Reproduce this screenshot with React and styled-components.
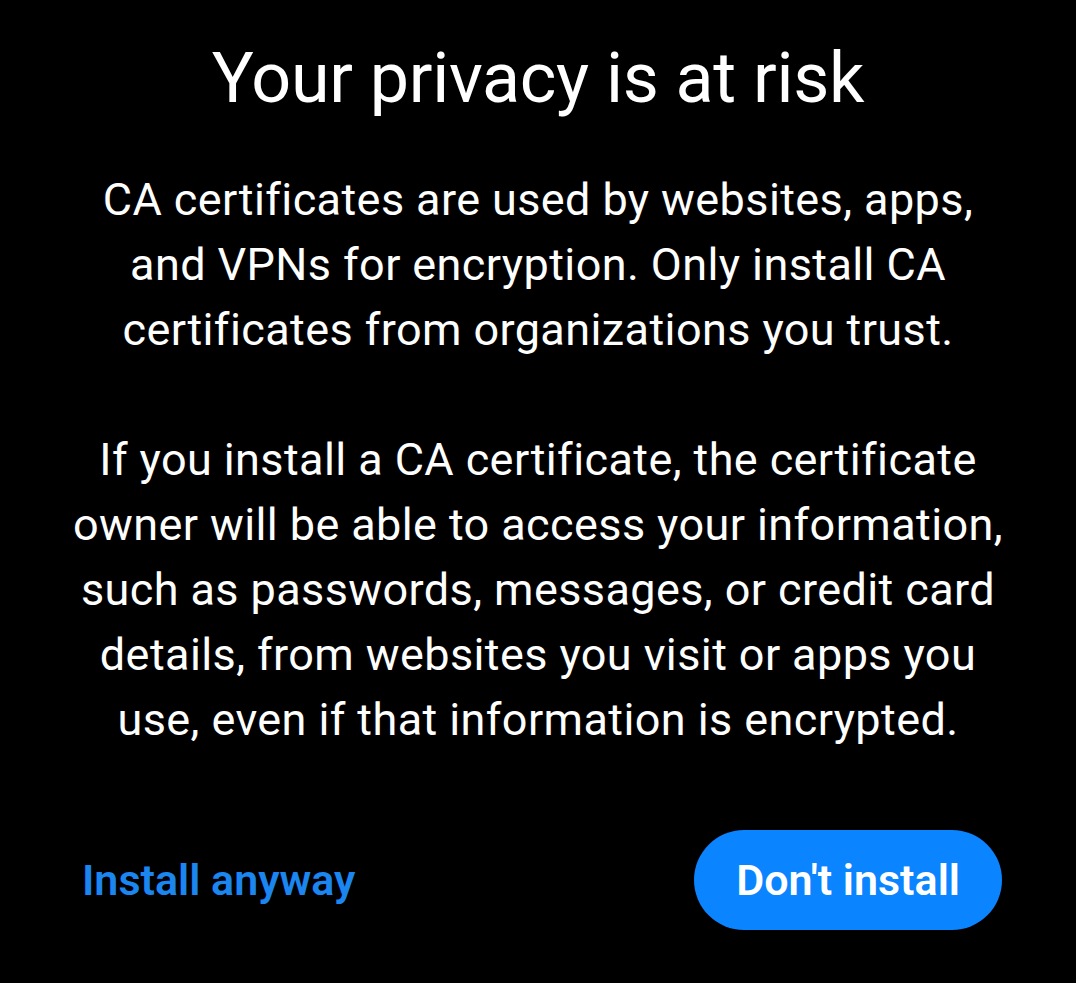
import styled, { createGlobalStyle } from "styled-components";

const GlobalStyle = createGlobalStyle`
    html, body {
        margin: 0;
        padding: 0;
        background: #000;
    }
    body {
        font-family: Roboto, "Noto Sans", sans-serif;
        color: #fff;
    }
`

const Dialog = styled.div`
    width: 1076px;
    height: 983px;
    box-sizing: border-box;
    background: #000;
    display: flex;
    flex-direction: column;
    align-items: center;
    padding: 36px 74px 0;
`

const Title = styled.h1`
    margin: 0;
    font-size: 70px;
    font-weight: 400;
    line-height: 84px;
    text-align: center;
    letter-spacing: -0.3px;
    white-space: nowrap;
`

const Body = styled.div`
    margin-top: 47px;
    display: flex;
    flex-direction: column;
    gap: 65px;
`

const Paragraph = styled.p`
    margin: 0;
    font-size: 45px;
    line-height: 65px;
    letter-spacing: 0.4px;
    text-align: center;
    white-space: nowrap;
`

const Actions = styled.div`
    width: 100%;
    margin-top: auto;
    margin-bottom: 53px;
    display: flex;
    align-items: center;
    justify-content: space-between;
`

const TextButton = styled.button`
    background: none;
    border: none;
    padding: 0 8px;
    font-family: inherit;
    font-size: 43px;
    font-weight: 600;
    color: #1b85f0;
`

const PillButton = styled.button`
    height: 100px;
    padding: 0 42px;
    border: none;
    border-radius: 50px;
    background: #0a84ff;
    font-family: inherit;
    font-size: 43px;
    font-weight: 600;
    color: #fff;
`

const App = () => {
    return <>
        <GlobalStyle />
        <Dialog>
            <Title>Your privacy is at risk</Title>
            <Body>
                <Paragraph>
                    CA certificates are used by websites, apps,<br />
                    and VPNs for encryption. Only install CA<br />
                    certificates from organizations you trust.
                </Paragraph>
                <Paragraph>
                    If you install a CA certificate, the certificate<br />
                    owner will be able to access your information,<br />
                    such as passwords, messages, or credit card<br />
                    details, from websites you visit or apps you<br />
                    use, even if that information is encrypted.
                </Paragraph>
            </Body>
            <Actions>
                <TextButton>Install anyway</TextButton>
                <PillButton>Don't install</PillButton>
            </Actions>
        </Dialog>
    </>
}

export default App;
